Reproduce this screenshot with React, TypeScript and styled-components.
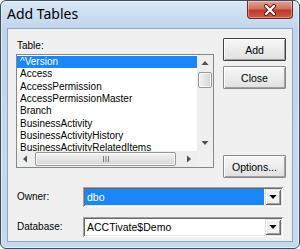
import styled, { createGlobalStyle } from "styled-components";

const GlobalStyle = createGlobalStyle`
  html, body { margin: 0; padding: 0; background: #ffffff; }
  body { width: 300px; height: 249px; overflow: hidden; }
`;

const tables = [
  "^Version",
  "Access",
  "AccessPermission",
  "AccessPermissionMaster",
  "Branch",
  "BusinessActivity",
  "BusinessActivityHistory",
  "BusinessActivityRelatedItems",
];

const Window = styled.div`
  box-sizing: border-box;
  width: 300px;
  height: 249px;
  border: 1px solid #3d4c5e;
  border-radius: 6px;
  background: linear-gradient(#d8e7f7, #c0d5ec 28px, #c6daef);
  box-shadow: inset 0 0 0 1px rgba(255, 255, 255, 0.55);
  display: flex;
  flex-direction: column;
  font-family: "Liberation Sans", Arial, sans-serif;
  font-size: 10px;
  color: #000;
`;

const TitleBar = styled.div`
  height: 27px;
  display: flex;
  justify-content: space-between;
  align-items: flex-start;
  padding: 0 6px 0 6px;
`;

const Title = styled.span`
  font-family: "Noto Sans", "Open Sans", sans-serif;
  font-size: 14px;
  line-height: 20px;
  padding-top: 3px;
  color: #000;
`;

const CloseButton = styled.div`
  box-sizing: border-box;
  width: 46px;
  height: 18px;
  border: 1px solid #6b2a24;
  border-top: none;
  border-radius: 0 0 4px 4px;
  background: linear-gradient(#e3a496, #d0715f 45%, #bf3a2a 55%, #cd5a42);
  box-shadow: inset 0 0 0 1px rgba(255, 255, 255, 0.35);
  display: flex;
  align-items: center;
  justify-content: center;
`;

const Client = styled.div`
  flex: 1;
  margin: 0 6px 6px 6px;
  border: 1px solid #8fa4bd;
  background: #f0f0f0;
  padding: 9px 0 0 8px;
  display: flex;
  flex-direction: column;
`;

const TopSection = styled.div`
  display: grid;
  grid-template-columns: 198px 63px;
  column-gap: 9px;
`;

const ListColumn = styled.div`
  display: flex;
  flex-direction: column;
  align-self: start;
`;

const FieldLabel = styled.label<{ $width?: number }>`
  display: block;
  line-height: 16px;
  padding-left: 1px;
  ${(p) => (p.$width ? `width: ${p.$width}px; flex: none;` : "")}
`;

const ListBox = styled.div`
  box-sizing: border-box;
  width: 198px;
  height: 114px;
  border: 1px solid #828790;
  background: #fff;
  display: grid;
  grid-template-columns: 180px 16px;
  grid-template-rows: 96px 16px;
`;

const Items = styled.div`
  overflow: hidden;
  padding-top: 1px;
`;

const Item = styled.div<{ $selected?: boolean }>`
  height: 12.35px;
  line-height: 12.35px;
  padding-left: 3px;
  white-space: nowrap;
  background: ${(p) => (p.$selected ? "#1a86f7" : "transparent")};
  color: ${(p) => (p.$selected ? "#fff" : "#000")};
`;

const VScroll = styled.div`
  background: #eeeeee;
  display: flex;
  flex-direction: column;
  align-items: stretch;
`;

const HScroll = styled.div`
  background: #eeeeee;
  display: flex;
  align-items: stretch;
`;

const ArrowCell = styled.div`
  width: 16px;
  height: 16px;
  flex: none;
  display: flex;
  align-items: center;
  justify-content: center;
`;

const VTrack = styled.div`
  flex: 1;
  display: flex;
  flex-direction: column;
  padding: 1px 1px 0 1px;
`;

const HTrack = styled.div`
  flex: 1;
  display: flex;
  padding: 1px 3px 1px 2px;
`;

const Thumb = styled.div<{ $size: number; $vertical?: boolean }>`
  box-sizing: border-box;
  ${(p) => (p.$vertical ? `height: ${p.$size}px;` : `width: ${p.$size}px;`)}
  flex: none;
  border: 1px solid #979797;
  border-radius: 2px;
  background: ${(p) =>
    p.$vertical
      ? "linear-gradient(90deg, #f4f4f4, #e4e4e4 50%, #d6d6d6)"
      : "linear-gradient(#f4f4f4, #e4e4e4 50%, #d6d6d6)"};
  box-shadow: inset 0 0 0 1px rgba(255, 255, 255, 0.8);
  display: flex;
  align-items: center;
  justify-content: center;
`;

const Corner = styled.div`
  background: #f0f0f0;
`;

const ButtonColumn = styled.div`
  display: flex;
  flex-direction: column;
  gap: 5px;
  height: 140px;
`;

const PushButton = styled.button<{ $default?: boolean; $bottom?: boolean }>`
  box-sizing: border-box;
  width: 63px;
  height: 23px;
  padding: 0;
  margin: 0;
  margin-top: ${(p) => (p.$bottom ? "auto" : "0")};
  font-family: "Liberation Sans", Arial, sans-serif;
  font-size: 10.5px;
  color: #000;
  border: 1px solid ${(p) => (p.$default ? "#404040" : "#8a8a8a")};
  border-radius: 1px;
  background: linear-gradient(#f7f7f7, #ececec 50%, #e0e0e0);
  box-shadow: inset 1px 1px 0 #ffffff, inset -1px -1px 0 #a0a0a0;
`;

const FormRows = styled.div`
  display: flex;
  flex-direction: column;
  gap: 10px;
  margin-top: 9px;
`;

const FormRow = styled.div`
  display: flex;
  align-items: center;
`;

const Combo = styled.div`
  box-sizing: border-box;
  width: 200px;
  height: 20px;
  background: #fff;
  padding: 2px;
  box-shadow: inset 1px 1px 0 #a0a0a0, inset -1px -1px 0 #ffffff,
    inset 2px 2px 0 #696969, inset -2px -2px 0 #e3e3e3;
  display: flex;
  align-items: stretch;
`;

const ComboValue = styled.div<{ $selected?: boolean }>`
  flex: 1;
  padding-left: 2px;
  line-height: 16px;
  font-size: 10.5px;
  white-space: nowrap;
  overflow: hidden;
  background: ${(p) => (p.$selected ? "#1a86f7" : "transparent")};
  color: ${(p) => (p.$selected ? "#fff" : "#000")};
  margin-right: 1px;
`;

const DropButton = styled.div`
  box-sizing: border-box;
  width: 16px;
  flex: none;
  background: #f0f0f0;
  box-shadow: inset 1px 1px 0 #e3e3e3, inset -1px -1px 0 #696969,
    inset 2px 2px 0 #ffffff, inset -2px -2px 0 #a0a0a0;
  display: flex;
  align-items: center;
  justify-content: center;
`;

const Triangle = ({ dir, color = "#505050" }: { dir: "up" | "down" | "left" | "right"; color?: string }) => {
  const pts = {
    up: "0.5,5 7.5,5 4,1",
    down: "0.5,1 7.5,1 4,5",
    left: "5,0.5 5,7.5 1,4",
    right: "1,0.5 1,7.5 5,4",
  }[dir];
  const vertical = dir === "up" || dir === "down";
  return (
    <svg width={vertical ? 8 : 6} height={vertical ? 6 : 8} viewBox={vertical ? "0 0 8 6" : "0 0 6 8"}>
      <polygon points={pts} fill={color} />
    </svg>
  );
};

const Grip = () => (
  <svg width="8" height="6" viewBox="0 0 8 6">
    <path d="M1.5 0v6M4 0v6M6.5 0v6" stroke="#7a7a7a" strokeWidth="1" />
  </svg>
);

const CloseGlyph = () => (
  <svg width="14" height="12" viewBox="0 0 14 12">
    <path d="M3 2l8 8M11 2l-8 8" stroke="#5a1d16" strokeWidth="4" strokeLinecap="round" />
    <path d="M3 2l8 8M11 2l-8 8" stroke="#ffffff" strokeWidth="2.2" strokeLinecap="round" />
  </svg>
);

export default function App() {
  return (
    <>
      <GlobalStyle />
      <Window>
        <TitleBar>
          <Title>Add Tables</Title>
          <CloseButton>
            <CloseGlyph />
          </CloseButton>
        </TitleBar>
        <Client>
          <TopSection>
            <ListColumn>
              <FieldLabel>Table:</FieldLabel>
              <ListBox>
                <Items>
                  {tables.map((t, i) => (
                    <Item key={t} $selected={i === 0}>
                      {t}
                    </Item>
                  ))}
                </Items>
                <VScroll>
                  <ArrowCell>
                    <Triangle dir="up" />
                  </ArrowCell>
                  <VTrack>
                    <Thumb $vertical $size={16} />
                  </VTrack>
                  <ArrowCell>
                    <Triangle dir="down" />
                  </ArrowCell>
                </VScroll>
                <HScroll>
                  <ArrowCell>
                    <Triangle dir="left" />
                  </ArrowCell>
                  <HTrack>
                    <Thumb $size={141}>
                      <Grip />
                    </Thumb>
                  </HTrack>
                  <ArrowCell>
                    <Triangle dir="right" />
                  </ArrowCell>
                </HScroll>
                <Corner />
              </ListBox>
            </ListColumn>
            <ButtonColumn>
              <PushButton $default>Add</PushButton>
              <PushButton>Close</PushButton>
              <PushButton $bottom>Options...</PushButton>
            </ButtonColumn>
          </TopSection>
          <FormRows>
            <FormRow>
              <FieldLabel $width={66}>Owner:</FieldLabel>
              <Combo>
                <ComboValue $selected>dbo</ComboValue>
                <DropButton>
                  <Triangle dir="down" color="#000" />
                </DropButton>
              </Combo>
            </FormRow>
            <FormRow>
              <FieldLabel $width={66}>Database:</FieldLabel>
              <Combo>
                <ComboValue>ACCTivate$Demo</ComboValue>
                <DropButton>
                  <Triangle dir="down" color="#000" />
                </DropButton>
              </Combo>
            </FormRow>
          </FormRows>
        </Client>
      </Window>
    </>
  );
}
